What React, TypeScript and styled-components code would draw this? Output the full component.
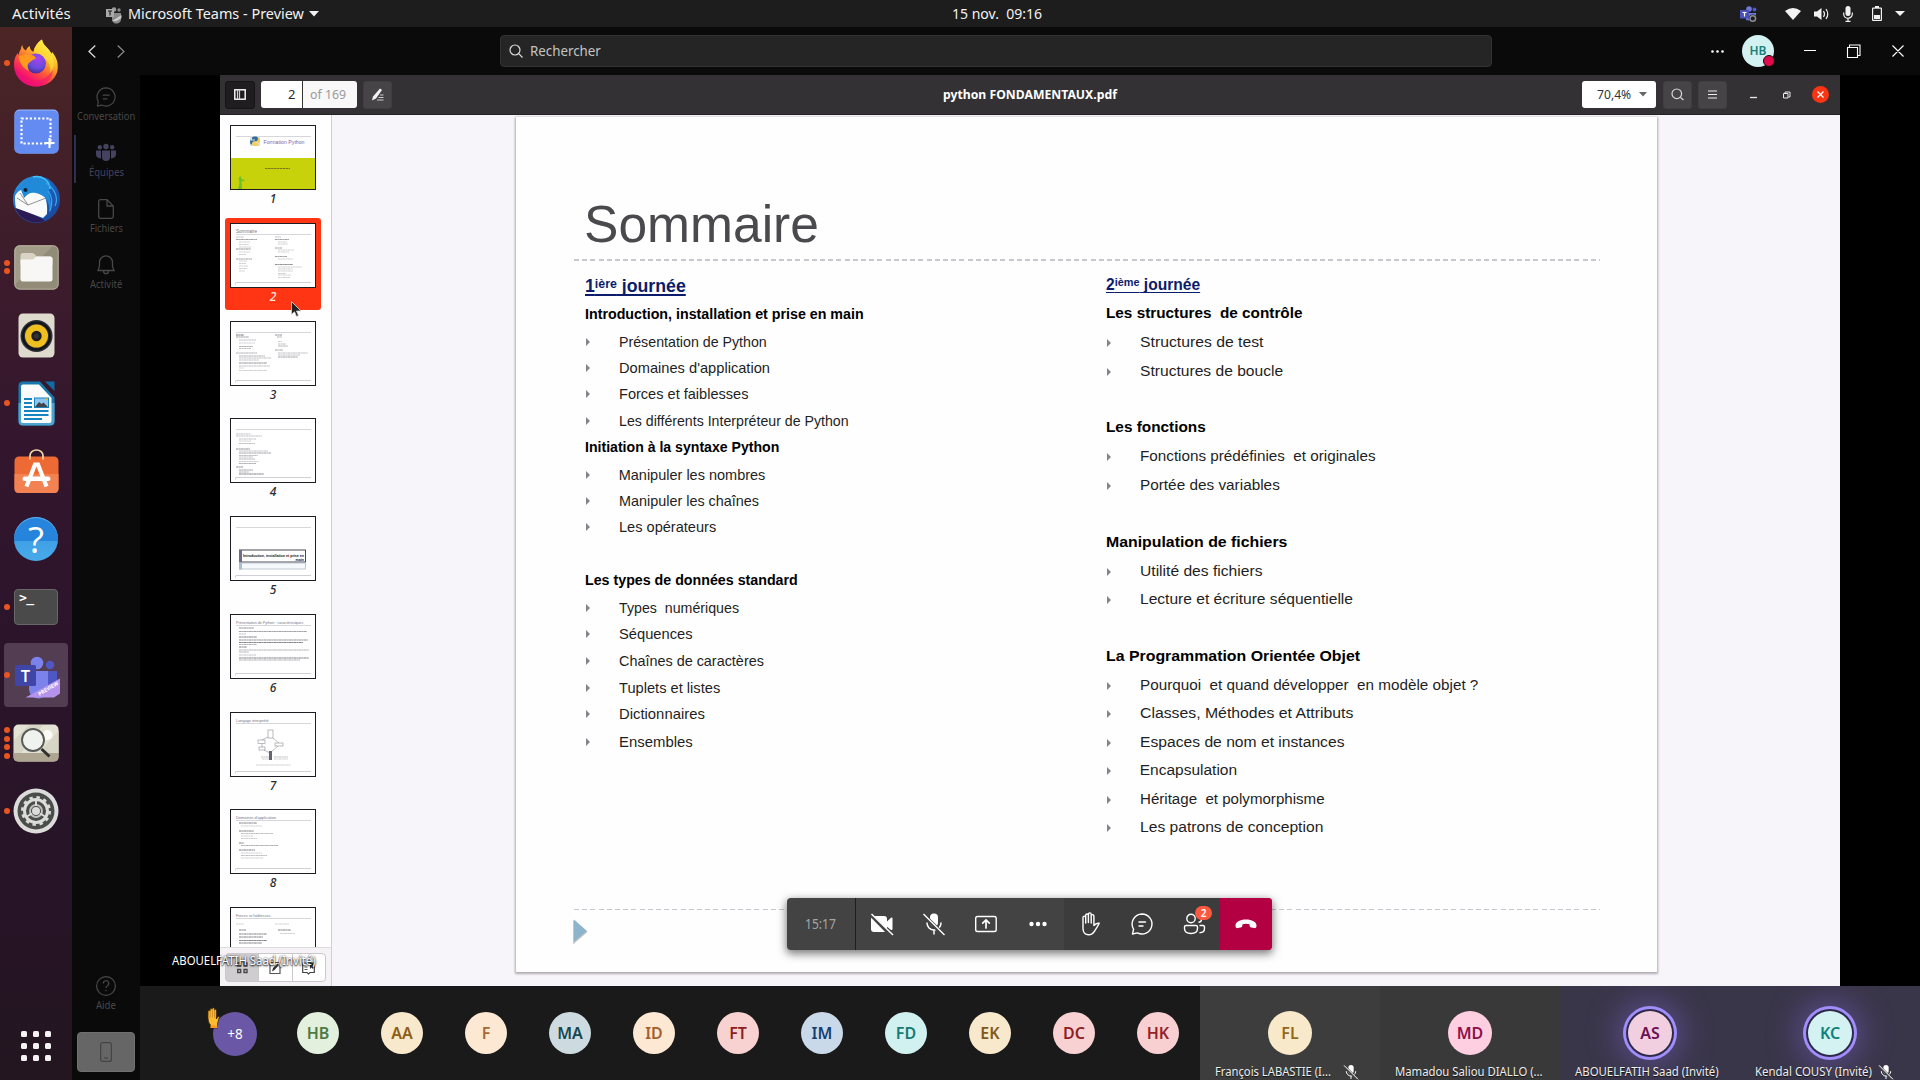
import React, { useLayoutEffect, useRef, useState } from 'react';
import styled, { createGlobalStyle, css } from 'styled-components';

const GlobalStyle = createGlobalStyle`
  * { box-sizing: border-box; }
  body { margin: 0; background: #000; overflow: hidden; font-family: 'Noto Sans', sans-serif; }
  svg { display: block; flex: none; overflow: visible; }
`;

const UI = "'Noto Sans', sans-serif";
const SLIDE = "'Liberation Sans', Arial, sans-serif";

/* ---------- text set to a given measure ---------- */
const FitBox = styled.span<{ $w: number }>`
  display: inline-block;
  flex: none;
  width: ${(p) => p.$w}px;
  white-space: pre;
  text-align: left;
`;
const FitInner = styled.span`
  display: inline-block;
  transform-origin: 0 50%;
`;
function Fit({ w, children }: { w: number; children: React.ReactNode }) {
  const ref = useRef<HTMLSpanElement>(null);
  const [k, setK] = useState(1);
  useLayoutEffect(() => {
    if (ref.current) setK(w / ref.current.offsetWidth);
  }, [w]);
  return (
    <FitBox $w={w}>
      <FitInner ref={ref} style={{ transform: `scaleX(${k})` }}>{children}</FitInner>
    </FitBox>
  );
}

/* ---------- desktop shell ---------- */
const Desktop = styled.div`
  width: 1920px;
  height: 1080px;
  display: flex;
  flex-direction: column;
  overflow: hidden;
  background: #000;
`;
const TopBar = styled.header`
  height: 27px;
  flex: none;
  display: grid;
  grid-template-columns: 952px 1fr auto;
  align-items: center;
  background: #1d1d1d;
  color: #f2f2f2;
  font: 14.5px/27px ${UI};
`;
const TopLeft = styled.div`
  display: flex;
  align-items: center;
  padding-left: 12px;
`;
const AppMenu = styled.div`
  display: flex;
  align-items: center;
  margin-left: 35px;
  gap: 5.500px;
`;
const Tray = styled.div`
  display: flex;
  align-items: center;
  padding-right: 15px;
`;
const TrayItem = styled.span<{ $ml?: number }>`
  margin-left: ${(p) => p.$ml ?? 13}px;
`;
const Work = styled.div`
  flex: 1;
  display: flex;
  min-height: 0;
`;

/* ---------- dock ---------- */
const DockBar = styled.nav`
  width: 72px;
  flex: none;
  display: flex;
  flex-direction: column;
  gap: 4px;
  padding: 4px 0 13px;
  background: linear-gradient(180deg, #4c2525 0%, #3e1d2b 20%, #33162e 40%, #2a142a 62%, #271426 85%, #231620 100%);
`;
const DockCell = styled.div<{ $active?: boolean }>`
  position: relative;
  width: 64px;
  height: 64px;
  margin-left: 4px;
  border-radius: 4px;
  display: flex;
  align-items: center;
  justify-content: center;
  background: ${(p) => (p.$active ? '#533d53' : 'transparent')};
`;
const Dots = styled.div`
  position: absolute;
  left: 0;
  top: 0;
  height: 64px;
  display: flex;
  flex-direction: column;
  justify-content: center;
  gap: 2.7px;
`;
const Dot = styled.i`
  width: 6px;
  height: 6px;
  border-radius: 50%;
  background: #e95420;
`;
const AppsGrid = styled.div`
  margin: auto auto 6px;
  display: grid;
  grid-template-columns: repeat(3, 6px);
  gap: 6px;
`;
const AppsDot = styled.i`
  height: 6px;
  border-radius: 1.5px;
  background: #f4f2f3;
`;

const Firefox = () => (
  <svg width="46" height="48" viewBox="0 0 46 48">
    <defs>
      <linearGradient id="ff1" x1=".8" y1=".1" x2=".25" y2=".95">
        <stop offset="0" stopColor="#fff44f" /><stop offset=".3" stopColor="#ffb52b" />
        <stop offset=".58" stopColor="#ff5a36" /><stop offset=".85" stopColor="#f5156c" /><stop offset="1" stopColor="#e00887" />
      </linearGradient>
      <radialGradient id="ff2" cx=".6" cy=".25" r=".8">
        <stop offset="0" stopColor="#a844f0" /><stop offset=".6" stopColor="#6a4bdc" /><stop offset="1" stopColor="#45278f" />
      </radialGradient>
      <linearGradient id="ff3" x1=".8" y1="0" x2=".3" y2="1">
        <stop offset="0" stopColor="#fff44f" /><stop offset=".6" stopColor="#ffcf2f" /><stop offset="1" stopColor="#ff8b1c" />
      </linearGradient>
    </defs>
    <path d="M8 10c0-2 .6-3 1.300-4 .3 3 1.300 4 3.700 5.500 1-2.500 2.300-3.700 3.800-4.500 0 3 1 4.500 3.700 6 .7-5 4-9.500 8.500-12.500.7 4.500 3.500 6.500 7 10.500 1 1.200 1.700 2.500 2.200 4l1-2c3 3.700 5.800 9 5.500 14C45.500 38.500 35.500 47.500 23 47.500 10.500 47.500 1 38 1 25.500 1 19 3.500 16 4.800 14c.2 1 .6 1.500 1 2C6 13 6.800 11.500 8 10z" fill="url(#ff1)" />
    <path d="M20.500 13C21.500 8 25 3 29 .5c.7 4.500 3.500 6.500 7 10.500 6.500 8 6 18 1 23.500 1-6-.5-10-3.500-13-3-3-8-4-13-8.500z" fill="url(#ff3)" />
    <circle cx="23" cy="24.500" r="10" fill="url(#ff2)" />
    <path d="M5.500 18c3-3 8-3 11-1.500 3-1.500 5.500.5 6.500 3-2.500.8-4 2-6 3.500-3 2-3 6-.5 9C10 30 7 24 5.500 18z" fill="#ff9a1f" />
    <path d="M3 30c4 9 13 13 22 11.500 7-1.300 12-5.500 14.500-11C40 40 32 47.500 23 47.500 13 47.500 5 41 3 30z" fill="#f0146e" opacity=".55" />
  </svg>
);
const Capture = () => (
  <svg width="45" height="45" viewBox="0 0 45 45">
    <rect x=".5" y=".5" width="44" height="44" rx="5" fill="#9bb8fb" />
    <rect x=".5" y="1.500" width="44" height="43" rx="5" fill="#638bf1" />
    <rect x="7.500" y="9.500" width="29" height="25" fill="none" stroke="#fff" strokeWidth="2.200" strokeDasharray="2.200 1.950" />
    <path d="M35.500 29v10M30.500 34h10" stroke="#fff" strokeWidth="2" />
  </svg>
);
const Thunderbird = () => (
  <svg width="49" height="48" viewBox="0 0 49 48">
    <defs><linearGradient id="tb" x1="0" y1="0" x2="1" y2="1"><stop offset="0" stopColor="#2f9fe8" /><stop offset=".5" stopColor="#1a63bf" /><stop offset="1" stopColor="#1b3f91" /></linearGradient></defs>
    <circle cx="24.500" cy="24.500" r="23.500" fill="url(#tb)" />
    <path d="M3 33c6 1 24 8 30 13-10 3.500-24 1-30-13z" fill="#2a1a55" />
    <path d="M3 21C8 12 14 14 24 15c10 1 12 14 11 24l-4 4L4 33c-1-4-1-8-1-12z" fill="#fafafa" />
    <path d="M5 23l11 7 18-7M16 30L8 18" fill="none" stroke="#777" strokeWidth=".8" />
    <path d="M9 13C13 4 20 0 27 1c8 1 11 7 10 14-1 8 5 12 0 24 2-12-4-19-13-21-5-1-8 0-12 5-1-4-3-6-3-10z" fill="#2089d8" />
    <path d="M21 2c9-2 17 4 17 12" fill="none" stroke="#45c1f2" strokeWidth="1.500" />
    <circle cx="13.500" cy="15" r="2" fill="#123" />
    <path d="M34 8c8 5 13 14 9 23M36 16c4 5 5 12 2 20" fill="none" stroke="#3aa7ee" strokeWidth="1.200" />
  </svg>
);
const Files = () => (
  <svg width="45" height="45" viewBox="0 0 45 45">
    <rect x=".5" y=".5" width="44" height="44" rx="5" fill="#918b78" />
    <path d="M.5 40V6Q.5.5 6 .5h33z" fill="#a19b88" />
    <rect x=".8" y=".8" width="43.400" height="43.400" rx="5" fill="none" stroke="#bbb6a5" strokeWidth=".9" />
    <path d="M6.500 10.500q0-2.500 2.500-2.500h9q2 0 3 1.500l1.500 2H36q2.500 0 2.500 2.500V20h-32z" fill="#d9d3c5" />
    <path d="M6.500 14.500H19l3.500-3H36q2.500 0 2.500 2.500v20q0 2.500-2.500 2.500H9q-2.500 0-2.500-2.500z" fill="#f8f7f5" />
  </svg>
);
const Speaker = () => (
  <svg width="37" height="45" viewBox="0 0 37 45">
    <rect x=".5" y=".5" width="36" height="44" rx="4.500" fill="#dedacd" />
    <circle cx="18.500" cy="23" r="16" fill="#2f3036" />
    <circle cx="18.500" cy="23" r="13.500" fill="none" stroke="#11131a" strokeWidth="2" />
    <circle cx="18.500" cy="23" r="11.500" fill="#eebf1f" />
    <circle cx="18.500" cy="23" r="5.200" fill="#1e1e1e" />
    <circle cx="18.500" cy="23" r="2.500" fill="#333" />
  </svg>
);
const Writer = () => (
  <svg width="37" height="45" viewBox="0 0 37 45">
    <path d="M5 .5h17l14.500 16V40q0 4.500-4.500 4.500H5Q.5 44.500.5 40V5Q.5.500 5 .5z" fill="#1878ad" />
    <path d="M.5 22h36v18q0 4.500-4.500 4.500H5Q.5 44.500.5 40z" fill="#4ba3ce" />
    <path d="M27 .5h9.500V10z" fill="#0f6da6" />
    <path d="M5 3.500h16L33.500 17v23q0 2-2 2h-27q-1.500 0-1.500-2V5.500q0-2 2-2z" fill="#fbfbfb" />
    <path d="M6 18h8M6 22h8M6 26h8M6 30h24.500M6 34h24.500M6 38h18" stroke="#1583c0" strokeWidth="1.900" />
    <rect x="16.500" y="17" width="14" height="9.500" fill="#8cc5ee" stroke="#1583c0" />
    <path d="M17 26l4-5 2.500 2 2-1.500 4.500 4.500z" fill="#444" /><path d="M27 17.500h3v3z" fill="#f6b400" />
  </svg>
);
const Software = () => (
  <svg width="45" height="45" viewBox="0 0 45 45">
    <path d="M16 12V6.500a6.500 5.500 0 0 1 13 0V12" fill="none" stroke="#f5d9a8" strokeWidth="1.700" />
    <rect x=".5" y="7.500" width="44" height="36.500" rx="4.500" fill="#ee6a35" />
    <path d="M.5 25h44v14.500q0 4.500-4.500 4.500H5q-4.500 0-4.500-4.500z" fill="#f28252" />
    <path d="M12.500 37.500L21 15.500h3l8.500 22" fill="none" stroke="#fff" strokeWidth="4.200" />
    <rect x="8.500" y="27.500" width="28" height="4.500" rx="2.200" fill="#fff" />
    <path d="M16 10.500V7M29 10.500V7" stroke="#f5d9a8" strokeWidth="1.500" />
  </svg>
);
const HelpDisc = styled.div`
  width: 44px;
  height: 44px;
  border-radius: 50%;
  background: linear-gradient(180deg, #2684dc 0 54%, #3fa0e6 54%, #49aaea 100%);
  box-shadow: inset 0 1px 0 #5cb0ee;
  color: #fff;
  text-align: center;
  font: 37px/44px 'Open Sans', sans-serif;
`;
const Term = styled.div`
  width: 44px;
  height: 36px;
  border-radius: 4px;
  background: #4a4a4a;
  border: 1px solid #686868;
  color: #fff;
  font: bold 13px/14px 'DejaVu Sans Mono', monospace;
  padding: 1px 0 0 4px;
  letter-spacing: -0.5px;
`;
const TeamsLogo = () => (
  <svg width="48" height="48" viewBox="0 0 48 48">
    <circle cx="38" cy="14" r="4.200" fill="#4f57c4" /><path d="M33 20h12v15a8 8 0 0 1-12 6z" fill="#4f57c4" />
    <circle cx="25" cy="12" r="6.300" fill="#7b83eb" /><path d="M17 20h19v17a9.500 9.500 0 0 1-19 2z" fill="#7b83eb" />
    <rect x="3" y="14" width="21" height="21" rx="1.500" fill="#4045a8" />
    <text x="13.500" y="30.500" textAnchor="middle" fontFamily="Open Sans" fontWeight="600" fontSize="16.500" fill="#fff">T</text>
    <path d="M48 27.500v15l-6 4H13.500z" fill="#b593ec" />
    <text transform="translate(27.500 45) rotate(-31)" fontFamily="Open Sans" fontWeight="700" fontSize="5.200" fill="#fff">PREVIEW</text>
  </svg>
);
const Viewer = () => (
  <svg width="46" height="38" viewBox="0 0 46 38">
    <rect x=".5" y=".5" width="45" height="37" rx="5" fill="#e3e2d5" /><path d="M26 29L46 6v23zM8 29L30 1H16L1 16v13z" fill="#d2d0bd" opacity=".7" />
    <path d="M.5 29h45v4q0 4.500-4.500 4.500H5Q.5 37.500.5 33z" fill="#afa692" />
    <circle cx="34.500" cy="11" r="5" fill="#fbfaf4" />
    <circle cx="20" cy="16" r="11" fill="#eff2ee" stroke="#595b58" strokeWidth="1.900" />
    <path d="M28.500 25l8 7.500" stroke="#2f302f" strokeWidth="3" />
  </svg>
);
const Gear = () => (
  <svg width="46" height="46" viewBox="0 0 46 46">
    <circle cx="23" cy="23" r="22.500" fill="#dcdcdb" /><circle cx="23" cy="23" r="18.500" fill="#4b4d4c" />
    <circle cx="23" cy="23" r="13.700" fill="none" stroke="#dcdcdb" strokeWidth="2.600" strokeDasharray="3.400 3.780" />
    <circle cx="23" cy="23" r="11.500" fill="none" stroke="#dcdcdb" strokeWidth="3" />
    <circle cx="23" cy="23" r="6" fill="none" stroke="#bfbfbe" strokeWidth="2" />
    <circle cx="23" cy="23" r="4" fill="#dcdcdb" />
    <path d="M23 11v7M13 29l6-3.500M33 29l-6-3.500" stroke="#dcdcdb" strokeWidth="2" />
  </svg>
);

const DOCK: { icon: React.ReactNode; dots: number; active?: boolean }[] = [
  { icon: <Firefox />, dots: 1 },
  { icon: <Capture />, dots: 0 },
  { icon: <Thunderbird />, dots: 0 },
  { icon: <Files />, dots: 2 },
  { icon: <Speaker />, dots: 0 },
  { icon: <Writer />, dots: 1 },
  { icon: <Software />, dots: 0 },
  { icon: <HelpDisc>?</HelpDisc>, dots: 0 },
  { icon: <Term>&gt;_</Term>, dots: 1 },
  { icon: <TeamsLogo />, dots: 1, active: true },
  { icon: <Viewer />, dots: 4 },
  { icon: <Gear />, dots: 1 },
];

/* ---------- Teams window ---------- */
const Teams = styled.div`
  flex: 1;
  display: flex;
  flex-direction: column;
  min-width: 0;
`;
const TeamsHead = styled.div`
  height: 48px;
  flex: none;
  display: flex;
  align-items: center;
  background: #0a0a0a;
`;
const NavArrows = styled.div`
  width: 428px;
  display: flex;
  gap: 21px;
  padding-left: 15.500px;
`;
const Search = styled.div`
  width: 992px;
  height: 32px;
  display: flex;
  align-items: center;
  gap: 7px;
  padding-left: 8px;
  border: 1px solid #323232;
  border-radius: 4px;
  background: #252525;
  color: #c4c4c4;
  font: 13.5px/30px ${UI};
`;
const HeadTools = styled.div`
  flex: 1;
  display: flex;
  align-items: center;
  padding-left: 219px;
`;
const Me = styled.div`
  position: relative;
  width: 32px;
  height: 32px;
  margin: 0 30px 0 18px;
  border-radius: 50%;
  background: #d3f1f1;
  color: #17807a;
  text-align: center;
  font: 600 12px/32px ${UI};
`;
const Presence = styled.i`
  position: absolute;
  right: -1px;
  bottom: 0;
  width: 12px;
  height: 12px;
  border-radius: 50%;
  background: #e00b4c;
  border: 1px solid #0a0a0a;
`;
const TeamsBody = styled.div`
  flex: 1;
  display: flex;
  min-height: 0;
`;
const Rail = styled.div`
  width: 68px;
  flex: none;
  display: flex;
  flex-direction: column;
  background: #0a0a0a;
  padding: 4px 0 8px;
`;
const RailItem = styled.div<{ $on?: boolean }>`
  height: 56px;
  display: flex;
  flex-direction: column;
  align-items: center;
  padding-top: 8px;
  color: ${(p) => (p.$on ? '#45425f' : '#484848')};
  background: ${(p) => (p.$on ? 'linear-gradient(#302f4f, #302f4f) 2px 0 / 2px 48px no-repeat' : 'none')};
  font: 10px/18px ${UI};
`;
const RailBottom = styled.div`
  margin-top: auto;
`;
const PhoneBox = styled.div`
  width: 58px;
  height: 40px;
  margin: 8px auto 0;
  border-radius: 4px;
  background: #666;
  border: 1px solid #707070;
  display: flex;
  align-items: center;
  justify-content: center;
`;
const Main = styled.div`
  flex: 1;
  display: flex;
  flex-direction: column;
  min-width: 0;
`;
const Stage = styled.div`
  position: relative;
  height: 911px;
  flex: none;
  display: flex;
  padding: 0 80px;
  background: #000;
`;
const ShareName = styled.div`
  position: absolute;
  left: 32px;
  top: 877px;
  color: #fff;
  font: 12px/18px ${UI};
  text-shadow: 0 1px 2px #000, 0 0 2px rgba(0, 0, 0, 0.7);
`;

/* ---------- shared PDF viewer ---------- */
const Pdf = styled.div`
  width: 1620px;
  display: flex;
  flex-direction: column;
`;
const PdfBar = styled.div`
  height: 40px;
  flex: none;
  display: grid;
  grid-template-columns: 723px 174px 1fr;
  align-items: center;
  background: #333133;
  border-bottom: 1px solid #242224;
  color: #fff;
  font: bold 12.5px/38px ${UI};
`;
const BarSide = styled.div<{ $end?: boolean }>`
  display: flex;
  align-items: center;
  padding: ${(p) => (p.$end ? '0 0 0 465px' : '0 0 0 5px')};
`;
const BarBtn = styled.div<{ $dark?: boolean; $ml?: number }>`
  width: ${(p) => (p.$dark ? 30 : 29)}px;
  height: 28px;
  margin-left: ${(p) => p.$ml ?? 0}px;
  border-radius: 3px;
  display: flex;
  align-items: center;
  justify-content: center;
  background: ${(p) => (p.$dark ? '#1f1d1f' : '#464446')};
  border: 1px solid ${(p) => (p.$dark ? '#161416' : '#403e40')};
`;
const PageEntry = styled.div`
  display: flex;
  width: 96px;
  height: 27px;
  margin: 0 6px;
  border-radius: 3px;
  overflow: hidden;
  font: 13px/26px ${UI};
`;
const PageNo = styled.div`
  width: 42px;
  padding-right: 6.500px;
  text-align: right;
  background: #fff;
  color: #2b2b2b;
  border-right: 1px solid #333;
`;
const PageCount = styled.div`
  flex: 1;
  padding-left: 7px;
  background: #f8f8f9;
  color: #9a9a9c;
`;
const ZoomBox = styled.div`
  width: 74px;
  height: 27px;
  padding-left: 14.500px;
  display: flex;
  align-items: center;
  gap: 8.500px;
  border-radius: 3px;
  background: #fff;
  color: #333;
  font: 12.5px/26px ${UI};
`;
const CloseDisc = styled.div`
  width: 17px;
  height: 17px;
  margin-left: 21.500px;
  border-radius: 50%;
  background: #fb3413;
  display: flex;
  align-items: center;
  justify-content: center;
`;
const PdfBody = styled.div`
  flex: 1;
  display: flex;
  min-height: 0;
  background: #f7f5f9;
`;
const Thumbs = styled.div`
  width: 112px;
  flex: none;
  display: flex;
  flex-direction: column;
  background: #fefefe;
  border-right: 1px solid #d3d0d5;
`;
const ThumbList = styled.div`
  height: 832px;
  flex: none;
  overflow: hidden;
  padding: 5px 0 0 5px;
`;
const ThumbCell = styled.div<{ $on?: boolean }>`
  position: relative;
  width: 96px;
  height: 92px;
  margin-bottom: 5.760px;
  padding: 5px 5px 0;
  border-radius: 3px;
  background: ${(p) => (p.$on ? '#ff3514' : 'transparent')};
  color: ${(p) => (p.$on ? '#ffe8e4' : '#2c2c2e')};
  font: italic 500 12px/18px ${UI};
  text-align: center;
`;
const ThumbPage = styled.div`
  height: 65px;
  border: 1px solid #1c1c22;
  background: #fff;
  font-style: normal;
  font-weight: 400;
`;
const Cursor = styled.div`
  position: absolute;
  left: 66px;
  top: 83px;
`;
const ViewTabs = styled.div`
  flex: 1;
  padding: 5px 5px 4px;
  background: #f5f3f6;
  border-top: 1px solid #dedbe0;
  display: flex;
`;
const Tab = styled.div<{ $on?: boolean }>`
  flex: 1;
  display: flex;
  align-items: center;
  justify-content: center;
  border: 1px solid #cbc8cc;
  margin-left: -1px;
  background: ${(p) => (p.$on ? '#cfcdd0' : '#fff')};
  &:first-child { border-radius: 4px 0 0 4px; margin-left: 0; }
  &:last-child { border-radius: 0 4px 4px 0; }
`;
const PageArea = styled.div`
  flex: 1;
  padding: 2px 0 0 184px;
`;
const Page = styled.article`
  width: 1141px;
  height: 855px;
  padding: 0 57px 0 58px;
  display: flex;
  flex-direction: column;
  background: #fefefe;
  box-shadow: 0 1px 2px 1px rgba(60, 55, 70, 0.38);
  font-family: ${SLIDE};
`;
const Title = styled.h1`
  height: 133px;
  margin: 0 0 9px;
  padding-left: 10px;
  display: flex;
  align-items: flex-end;
  color: #4a494d;
  font: normal 52px/52px ${SLIDE};
`;
const Rule = styled.div`
  height: 1.500px;
  flex: none;
  background: repeating-linear-gradient(90deg, #c9c7d0 0 5px, transparent 5px 8.200px);
`;
const Columns = styled.div`
  height: 648px;
  flex: none;
  display: grid;
  grid-template-columns: 521px 1fr;
  padding-left: 10.700px;
`;
const Column = styled.div<{ $size: number; $lh: number }>`
  font-size: ${(p) => p.$size}px;
  line-height: ${(p) => p.$lh}px;
  color: #000;
`;
const Line = styled.div<{ $h: number; $kind: string; $big?: boolean }>`
  height: ${(p) => p.$h}px;
  display: flex;
  align-items: flex-end;
  ${(p) => p.$kind === 'i' && css`color: #1f1f24;`}
  ${(p) => p.$kind !== 'i' && css`font-weight: bold;`}
  ${(p) => p.$kind === 'd' && css`
    color: #0b1c6c;
    font-size: ${p.$big ? 18.5 : 16}px;
    line-height: ${p.$big ? 23 : 21}px;
  `}
`;
const Bullet = styled.i`
  width: 34px;
  height: 13.500px;
  flex: none;
  &::before {
    content: '';
    display: block;
    width: 0;
    margin-left: 1px;
    border: solid transparent;
    border-width: 4px 0 4px 4.500px;
    border-left-color: #85828a;
  }
`;
const Day = styled.span<{ $thick: number }>`
  text-decoration: underline;
  text-decoration-thickness: ${(p) => p.$thick}px;
  text-decoration-skip-ink: none;
  text-underline-offset: 1.500px;
`;
const Sup = styled.span`
  font-size: 0.7em;
  line-height: 0;
  vertical-align: 0.32em;
`;
const Foot = styled.div`
  padding-top: 9px;
`;

type Row = [kind: 'd' | 'h' | 'i', baseline: number, width: number, text: string];
const LEFT: Row[] = [
  ['d', 292, 100.5, '1|ière| journée'],
  ['h', 319, 279, 'Introduction, installation et prise en main'],
  ['i', 347, 148, 'Présentation de Python'],
  ['i', 373, 150.5, "Domaines d'application"],
  ['i', 399, 129.5, 'Forces et faiblesses'],
  ['i', 426, 229.5, 'Les différents Interpréteur de Python'],
  ['h', 452, 194.5, 'Initiation à la syntaxe Python'],
  ['i', 480, 147, 'Manipuler les nombres'],
  ['i', 506, 140, 'Manipuler les chaînes'],
  ['i', 532, 97.5, 'Les opérateurs'],
  ['h', 585, 213, 'Les types de données standard'],
  ['i', 613, 120.5, 'Types  numériques'],
  ['i', 639, 74, 'Séquences'],
  ['i', 666, 145, 'Chaînes de caractères'],
  ['i', 693, 101, 'Tuplets et listes'],
  ['i', 719, 86, 'Dictionnaires'],
  ['i', 747, 74, 'Ensembles'],
];
const RIGHT: Row[] = [
  ['d', 290, 94.5, '2|ième| journée'],
  ['h', 319, 196.5, 'Les structures  de contrôle'],
  ['i', 348, 123, 'Structures de test'],
  ['i', 377, 143, 'Structures de boucle'],
  ['h', 433, 100, 'Les fonctions'],
  ['i', 462, 236, 'Fonctions prédéfinies  et originales'],
  ['i', 491, 139.5, 'Portée des variables'],
  ['h', 548, 181, 'Manipulation de fichiers'],
  ['i', 577, 122, 'Utilité des fichiers'],
  ['i', 605, 213, 'Lecture et écriture séquentielle'],
  ['h', 662, 254, 'La Programmation Orientée Objet'],
  ['i', 691, 338.5, 'Pourquoi  et quand développer  en modèle objet ?'],
  ['i', 719, 213, 'Classes, Méthodes et Attributs'],
  ['i', 748, 204, 'Espaces de nom et instances'],
  ['i', 776, 97, 'Encapsulation'],
  ['i', 805, 185, 'Héritage  et polymorphisme'],
  ['i', 833, 183.5, 'Les patrons de conception'],
];
function SlideColumn({ rows, size, lh, big }: { rows: Row[]; size: number; lh: number; big?: boolean }) {
  return (
    <Column $size={size} $lh={lh}>
      {rows.map(([kind, base, w, text], i) => {
        const prev = i ? rows[i - 1][1] : 256;
        const parts = text.split('|');
        return (
          <Line key={text} $kind={kind} $h={base - prev} $big={big}>
            {kind === 'i' && <Bullet />}
            <Fit w={w}>
              {kind === 'd' ? <Day $thick={big ? 2 : 1.3}>{parts[0]}<Sup>{parts[1]}</Sup>{parts[2]}</Day> : text}
            </Fit>
          </Line>
        );
      })}
    </Column>
  );
}

/* Miniature pages: each bar is [x, y, width, darkness] */
type Bar = [number, number, number, number];
const MINI: { title?: string; size?: number; bars: Bar[] }[] = [
  { bars: [] },
  {
    title: 'Sommaire', size: 4.6,
    bars: [[5, 13, 8, 4], [5, 15.5, 21, 6], [8, 18, 11, 3], [8, 20.5, 10, 3], [8, 23, 12, 3], [5, 25, 15, 7], [8, 28, 11, 3], [8, 30.5, 7, 3], [5, 35, 16, 6], [8, 37, 8, 3], [8, 39.5, 7, 3], [8, 42, 9, 3], [8, 44.500, 8, 3], [8, 47, 6, 3],
      [44, 13, 6, 4], [44, 15.500, 14, 6], [47, 18, 9, 3], [47, 20, 10, 3], [44, 24, 7, 6], [47, 26, 16, 3], [47, 28, 11, 3], [44, 32.500, 12, 6], [47, 35, 15, 3], [44, 40.500, 18, 7], [47, 43, 24, 3], [47, 45, 15, 3], [47, 47, 15, 3], [47, 49.500, 8, 3], [47, 51, 13, 3], [47, 53.500, 12, 3]],
  },
  {
    bars: [[5, 13, 8, 9], [5, 15, 13, 6], [8, 18, 17, 4], [8, 21, 16, 3], [8, 24.500, 14, 5], [8, 26.500, 12, 4], [5, 31, 21, 5], [8, 34, 26, 5], [8, 36, 32, 4], [8, 38, 20, 4], [8, 41, 28, 7], [8, 44, 31, 4], [8, 46, 5, 3], [8, 48.500, 28, 3], [44, 13, 7, 7], [46, 15, 5, 5], [47, 19.500, 4, 3], [47, 22, 8, 4], [47, 24, 10, 5], [44, 28, 8, 6], [47, 31, 30, 4], [47, 33, 22, 4], [47, 35, 20, 6]],
  },
  {
    bars: [[5, 15, 15, 4], [5, 17, 26, 4], [8, 20, 17, 4], [8, 22, 12, 3], [8, 24.500, 16, 4], [5, 30, 14, 7], [8, 32, 29, 4], [8, 34, 32, 6], [8, 36.500, 19, 4], [8, 38, 14, 4], [8, 40, 16, 5], [8, 42.500, 20, 3], [8, 44.500, 17, 5], [5, 48, 7, 7], [8, 51, 14, 6], [8, 53, 10, 5], [8, 55, 25, 8]],
  },
  { bars: [] },
  {
    title: 'Présentation de Python : caractéristiques', size: 3.700,
    bars: [[8, 13, 15, 7], [8, 16.500, 68, 6], [8, 19, 7, 4], [8, 22, 18, 8], [8, 25, 69, 7], [8, 27.500, 64, 8], [8, 29.500, 18, 5], [8, 32, 8, 8], [8, 35, 70, 5], [8, 37, 10, 5], [8, 40, 17, 4], [8, 43, 70, 8], [8, 45, 61, 5]],
  },
  { title: 'Langage interprété', size: 3.900, bars: [[25, 52, 35, 3], [30, 44, 9, 4], [43, 44, 14, 4], [31, 46, 8, 3], [43, 46, 14, 3]] },
  {
    title: "Domaines d'application", size: 3.900,
    bars: [[8, 13, 18, 8], [10, 16, 21, 3], [8, 21, 15, 8], [10, 23.500, 32, 4], [10, 26, 12, 3], [10, 28.500, 16, 3], [8, 33, 5, 8], [10, 35.500, 37, 5], [8, 40, 16, 8], [10, 43, 21, 3], [10, 45.500, 26, 4], [10, 48, 22, 3]],
  },
  { title: 'Forces et faiblesses', size: 3.900, bars: [[5, 16, 8, 3], [8, 22, 7, 8], [8, 26, 28, 8], [8, 29, 24, 8], [8, 32.500, 28, 8], [8, 35, 23, 8], [44, 16, 14, 3], [47, 22, 13, 8], [49, 25.500, 15, 3]] },
];
function MiniPage({ n }: { n: number }) {
  const m = MINI[n];
  return (
    <svg width="84" height="63" viewBox="0 0 84 63">
      <path d="M5 10.500h75" stroke="#c6c4cc" strokeWidth=".7" />
      {n > 0 && <path d="M5 58.500h75M4.500 58.500v2" stroke="#bcbac0" strokeWidth=".7" />}
      {m.title && <text x="5" y={n === 1 ? 9.300 : 9.200} fontFamily="Liberation Sans" fontSize={m.size} fill="#77757f">{m.title}</text>}
      {m.bars.map(([x, y, w, d], i) => (
        <path key={i} d={`M${x} ${y}h${w}`} stroke="#33323c" strokeOpacity={d / 13} strokeWidth="1" strokeDasharray="2.700 .4 1.600 .3" />
      ))}
      {n === 0 && (
        <g>
          <rect y="32" width="84" height="31" fill="#c8d20a" />
          <rect x="19" y="10" width="10" height="10" fill="#dedfd8" />
          <path d="M24 10.500c-3 0-3 1-3 3h3v1h-5c0 4 1 4 2 4 0-3 1-3 3-3 2.500 0 3-1 3-2.500 0-2-1-2.500-3-2.500z" fill="#2f6ca5" />
          <path d="M24 20c3 0 3.500-1 3.500-2.500H24v-1h5c.5-4-.5-4.500-2-4.500 0 3-1 3.500-3 3.500-2.500 0-2.500 1-2.500 2.500s1 2 2.500 2z" fill="#f7cf47" />
          <text x="32.500" y="17.500" fontFamily="Liberation Sans" fontSize="5.200" textLength="41" fill="#7468ad">Formation Python</text>
          <path d="M34 42.500h25" stroke="#7d7822" strokeWidth="1.100" strokeDasharray="2 .5 3 .5" />
          <path d="M7 63l1.500-6-1-5 2-2 1 3 4 1.500-4 1 .5 7.500z" fill="#6cc02c" />
        </g>
      )}
      {n === 4 && (
        <g>
          <rect x="8.500" y="33" width="66" height="12" fill="#fff" stroke="#4b4858" />
          <rect x="8" y="33" width="3" height="12" fill="#6f6b88" />
          <text x="73" y="39.500" textAnchor="end" fontFamily="Liberation Sans" fontWeight="bold" fontSize="4" textLength="61" lengthAdjust="spacingAndGlyphs" fill="#111">Introduction, installation et prise en</text>
          <text x="73" y="43.800" textAnchor="end" fontFamily="Liberation Sans" fontWeight="bold" fontSize="3.600" fill="#111">main</text>
          <rect x="8.500" y="46" width="66" height="6" fill="#f6f9fc" stroke="#a9b3bf" strokeWidth=".7" />
          <rect x="8" y="46" width="3" height="6.500" fill="#a9c0d4" />
        </g>
      )}
      {n === 6 && (
        <g fill="none" stroke="#8e8c94" strokeWidth=".6">
          <rect x="37" y="17" width="5" height="8" /><rect x="27" y="27" width="7" height="3.500" /><rect x="44" y="30" width="8" height="3" /><rect x="28" y="34" width="6" height="3" />
          <path d="M37 24l-6 3M42 25l6 5M31 31v3M33 37l6 3M47 33l-7 6" /><path d="M39.500 38v9" stroke="#66646c" strokeWidth="3" />
        </g>
      )}
    </svg>
  );
}

/* ---------- call bar ---------- */
const CallBar = styled.div`
  position: absolute;
  left: 647px;
  top: 823px;
  width: 485px;
  height: 52px;
  display: flex;
  border-radius: 4px;
  background: #434343;
  box-shadow: 0 3px 9px 1px rgba(0, 0, 0, 0.5);
`;
const Timer = styled.div`
  width: 69px;
  border-right: 1px solid #1e1e1e;
  color: #a6a6a6;
  font: 14px/51px ${UI};
  padding-left: 18px;
`;
const CallBtn = styled.div<{ $tone?: 'dark' | 'red' }>`
  position: relative;
  width: 52px;
  display: flex;
  align-items: center;
  justify-content: center;
  color: #fff;
  background: ${(p) => (p.$tone === 'red' ? '#b30043' : p.$tone === 'dark' ? '#3c3c3c' : 'transparent')};
  border-radius: ${(p) => (p.$tone === 'red' ? '0 4px 4px 0' : '0')};
`;
const Badge = styled.span`
  position: absolute;
  left: 27px;
  top: 8px;
  width: 17px;
  height: 14px;
  border-radius: 7px;
  background: #fc5a40;
  color: #fff;
  text-align: center;
  font: 600 10px/14px ${UI};
`;

/* ---------- participants ---------- */
const Strip = styled.div`
  flex: 1;
  display: flex;
  min-height: 0;
  background: #1a1a1a;
  padding-left: 52px;
`;
const Slot = styled.div`
  position: relative;
  width: 84px;
  padding-top: 26px;
  display: flex;
  justify-content: center;
  align-items: flex-start;
`;
const Avatar = styled.div<{ $bg: string; $fg: string; $s?: number; $ring?: boolean }>`
  width: ${(p) => p.$s ?? 42}px;
  height: ${(p) => p.$s ?? 42}px;
  flex: none;
  border-radius: 50%;
  background: ${(p) => p.$bg};
  color: ${(p) => p.$fg};
  text-align: center;
  font: 600 16px/${(p) => p.$s ?? 42}px ${UI};
  ${(p) => p.$ring && css`box-shadow: 0 0 0 2px #2d2948, 0 0 0 5px #a18dfb, 0 0 26px 14px rgba(98, 84, 155, 0.6);`}
`;
const More = styled(Avatar)`
  font-weight: 400;
  font-size: 13.5px;
  margin-left: 2px;
`;
const Raised = styled.div`
  position: absolute;
  left: 14px;
  top: 21px;
`;
const Tile = styled.div<{ $bg: string }>`
  width: 180px;
  flex: none;
  overflow: hidden;
  padding: 25px 0 0;
  display: flex;
  flex-direction: column;
  align-items: center;
  background: ${(p) => p.$bg};
`;
const TileName = styled.div<{ $gap: number }>`
  width: 100%;
  margin-top: 8px;
  padding: 0 0 0 15px;
  display: flex;
  align-items: center;
  gap: ${(p) => p.$gap}px;
  position: relative;
  color: #eee;
  font: 12px/17px ${UI};
  text-shadow: 0 1px 1px #111;
`;

const PEOPLE: [string, string, string][] = [
  ['HB', '#e3f0de', '#4f7a43'], ['AA', '#f8e9cc', '#8d5f16'], ['F', '#fde8d4', '#a8683a'], ['MA', '#cddbe0', '#14484f'],
  ['ID', '#fde8d4', '#a35f2e'], ['FT', '#f8d2d0', '#8c1f24'], ['IM', '#c9d9ea', '#173f74'], ['FD', '#d1f1f0', '#157a72'],
  ['EK', '#f8e9cc', '#81581d'], ['DC', '#f8d2d2', '#8d2025'], ['HK', '#f9d0d1', '#94232c'],
];
const TILES = [
  { i: 'FL', bg: '#f9e9cb', fg: '#93681c', tile: '#3d3d3d', name: 'François LABASTIE (I...', w: 116, mic: true, gap: 12 },
  { i: 'MD', bg: '#fdcfe0', fg: '#8f0f4c', tile: '#393939', name: 'Mamadou Saliou DIALLO (...', w: 148 },
  { i: 'AS', bg: '#f1cfe1', fg: '#6d0f50', tile: '#3a364a', name: 'ABOUELFATIH Saad (Invité)', w: 144, ring: true },
  { i: 'KC', bg: '#d3f2f1', fg: '#11807a', tile: '#3a364a', name: 'Kendal COUSY (Invité)', w: 117, ring: true, mic: true, gap: 6 },
];

const MicOff = ({ s = 24 }: { s?: number }) => (
  <svg width={s} height={s} viewBox="0 0 24 24" fill="none" stroke="#fff" strokeWidth="1.500">
    <rect x="8" y="1.500" width="8" height="13" rx="4" fill="#fff" stroke="none" />
    <path d="M5 10.500v.5a7 7 0 0 0 14 0v-.5M12 18v4.500" />
    <path d="M1.500 3L21 22.500" stroke="#434343" strokeWidth="4" /><path d="M1.500 2L22.500 23" />
  </svg>
);
const CamOff = () => (
  <svg width="24" height="24" viewBox="0 0 24 24">
    <path d="M4 4h10q3 0 3 3v2.500l4-3.700q1.500-.8 1.500.8v10.500q0 1.500-1.500.8l-4-3.200V17q0 3-3 3H4q-3 0-3-3V7q0-3 3-3z" fill="#fff" />
    <path d="M1.500 3.500L21.500 24" stroke="#434343" strokeWidth="3.500" /><path d="M1.500 2L23 23" stroke="#fff" strokeWidth="1.500" />
  </svg>
);
const ShareUp = () => (
  <svg width="24" height="24" viewBox="0 0 24 24" fill="none" stroke="#fff" strokeWidth="1.400" strokeLinecap="round">
    <rect x="1.700" y="4.500" width="20.500" height="15" rx="1.800" /><path d="M12 16V8.200M8.700 11.200L12 7.900l3.300 3.300" strokeWidth="1.700" />
  </svg>
);
const Chat = ({ s = 22, w = 1.4 }: { s?: number; w?: number }) => (
  <svg width={s} height={s} viewBox="0 0 22 22" fill="none" stroke="currentColor" strokeWidth={w} strokeLinecap="round" strokeLinejoin="round">
    <path d="M11 1a10 10 0 1 1-4.600 18.900L1.500 21l1.100-4.800A10 10 0 0 1 11 1zM8 9h6.500M8 13h4" />
  </svg>
);
const Hand = () => (
  <svg width="22" height="24" viewBox="0 0 22 24" fill="none" stroke="#fff" strokeWidth="1.400" strokeLinecap="round" strokeLinejoin="round">
    <path d="M4 13V5.500a1.300 1.300 0 0 1 2.700 0V11M6.700 11V3.300a1.300 1.300 0 0 1 2.700 0V10.500M9.400 10.500V2.300a1.300 1.300 0 0 1 2.800 0v8.200M12.200 11V4a1.300 1.300 0 0 1 2.700 0v9.500c1.500-1.800 3-2.700 5.300-2.200-1.400 3.200-2.800 5-4.500 7.500-1.500 2.500-3 4-6 4C6 22.800 4 20.500 4 16.500V13" />
  </svg>
);
const People = () => (
  <svg width="24" height="24" viewBox="0 0 24 24" fill="none" stroke="#fff" strokeWidth="1.400">
    <circle cx="9" cy="6.500" r="4.200" /><path d="M4 13.500h10q1.500 0 1.500 1.500v1.500q0 5-6.500 5T2.500 16.500V15q0-1.500 1.500-1.500zM16.500 10.300a3 3 0 1 0 0-6M17.500 20.700c3.500 0 5-1.500 5-4.200V15q0-1.500-1.500-1.500h-3.500" />
  </svg>
);

export default function App() {
  return (
    <Desktop>
      <GlobalStyle />
      <TopBar>
        <TopLeft>
          <Fit w={59}>Activités</Fit>
          <AppMenu>
            <svg width="16" height="14" viewBox="0 0 16 14"><circle cx="8" cy="2.500" r="2.300" fill="#999" /><circle cx="13" cy="3" r="1.700" fill="#888" /><path d="M6 6h9v5a4 4 0 0 1-9 2z" fill="#8b8b8b" /><rect y="2" width="8" height="8" fill="#aaa" /><path d="M2 4h4M4 4v4.500" stroke="#222" strokeWidth="1.200" /><path d="M15.500 8v3l-5 3H6z" fill="#ccc" /></svg>
            <Fit w={176}>Microsoft Teams - Preview</Fit>
            <svg width="10" height="6" viewBox="0 0 10 6"><path d="M0 0h10L5 5.500z" fill="#f2f2f2" /></svg>
          </AppMenu>
        </TopLeft>
        <Fit w={90}>15 nov.  09:16</Fit>
        <Tray>
          <TrayItem>
            <svg width="18" height="18" viewBox="0 0 18 18"><circle cx="9" cy="4" r="2.800" fill="#6f78dd" /><circle cx="14.500" cy="4.500" r="2" fill="#4f57c4" /><path d="M6 8h10v4l-5 4-5-1z" fill="#6f78dd" /><rect y="5" width="9" height="8.500" fill="#4a50b8" /><path d="M2.500 7.500h4M4.500 7.500v4" stroke="#fff" strokeWidth="1.200" /><circle cx="12.800" cy="13.500" r="4" fill="#1d1d1d" /><circle cx="12.800" cy="13.500" r="2.800" fill="none" stroke="#8d8d8d" strokeWidth="1.500" /></svg>
          </TrayItem>
          <TrayItem $ml={27}><svg width="16" height="12" viewBox="0 0 16 12"><path d="M0 3Q8-3 16 3L8 12z" fill="#f2f2f2" /></svg></TrayItem>
          <TrayItem><svg width="16" height="14" viewBox="0 0 16 14"><path d="M0 4.500h3L7.500 1v12L3 9.500H0z" fill="#f2f2f2" /><path d="M9.500 4q2 3 0 6M12 2q3.500 5 0 10" fill="none" stroke="#f2f2f2" strokeWidth="1.200" /></svg></TrayItem>
          <TrayItem><svg width="10" height="16" viewBox="0 0 10 16"><rect x="2.500" width="5" height="10" rx="2.500" fill="#f2f2f2" /><path d="M.7 6.500v1.500a4.300 4.300 0 0 0 8.600 0V6.500M5 12.500V15M2.500 15.300h5" fill="none" stroke="#f2f2f2" strokeWidth="1.200" /></svg></TrayItem>
          <TrayItem $ml={19}><svg width="10" height="15" viewBox="0 0 10 15"><path d="M3 0h4v1.500h2q1 0 1 1V14q0 1-1 1H1q-1 0-1-1V2.500q0-1 1-1h2z" fill="#f2f2f2" /><rect x="1.200" y="2.700" width="7.600" height="11.100" fill="#1d1d1d" /><rect x="2" y="9" width="6" height="4" fill="#f2f2f2" /></svg></TrayItem>
          <TrayItem><svg width="10" height="5" viewBox="0 0 10 5"><path d="M0 0h10L5 5z" fill="#f2f2f2" /></svg></TrayItem>
        </Tray>
      </TopBar>

      <Work>
        <DockBar>
          {DOCK.map((d, i) => (
            <DockCell key={i} $active={d.active}>
              <Dots>{Array.from({ length: d.dots }, (_, k) => <Dot key={k} />)}</Dots>
              {d.icon}
            </DockCell>
          ))}
          <AppsGrid>{Array.from({ length: 9 }, (_, k) => <AppsDot key={k} />)}</AppsGrid>
        </DockBar>

        <Teams>
          <TeamsHead>
            <NavArrows>
              <svg width="8" height="13" viewBox="0 0 8 13"><path d="M7.300.5L1 6.500l6.300 6" fill="none" stroke="#d8d8d8" strokeWidth="1.300" /></svg>
              <svg width="8" height="13" viewBox="0 0 8 13"><path d="M.7.5L7 6.500l-6.300 6" fill="none" stroke="#8a8a8a" strokeWidth="1.200" /></svg>
            </NavArrows>
            <Search>
              <svg width="14" height="14" viewBox="0 0 14 14" fill="none" stroke="#ddd" strokeWidth="1.200"><circle cx="6" cy="6" r="5" /><path d="M9.700 9.700L13.500 13.500" /></svg>
              <Fit w={71}>Rechercher</Fit>
            </Search>
            <HeadTools>
              <svg width="13" height="3" viewBox="0 0 13 3" fill="#fff"><circle cx="1.500" cy="1.500" r="1.300" /><circle cx="6.500" cy="1.500" r="1.300" /><circle cx="11.500" cy="1.500" r="1.300" /></svg>
              <Me><Fit w={17}>HB</Fit><Presence /></Me>
              <svg width="100" height="16" viewBox="0 0 100 16" fill="none" stroke="#fff" strokeWidth="1.100">
                <path d="M0 7.500h12M43.500 4.500h10v10h-10zM45.500 4.500v-2.500h10.500v10.500h-2.500M88.500 2.500l11 11M99.500 2.500l-11 11" />
              </svg>
            </HeadTools>
          </TeamsHead>

          <TeamsBody>
            <Rail>
              <RailItem><Chat s={20} w={1.3} /><Fit w={58}>Conversation</Fit></RailItem>
              <RailItem $on>
                <svg width="20" height="20" viewBox="0 0 20 20" fill="currentColor"><circle cx="10" cy="3.500" r="2.700" /><circle cx="3.800" cy="4.300" r="2.200" /><circle cx="16.200" cy="4.300" r="2.200" /><path d="M6 7.500h8V14a4 4 0 0 1-8 0zM0 7.500h5V15.500Q0 15 0 11.500zM20 7.500h-5V15.500q5-.5 5-4z" /></svg>
                <Fit w={35}>Équipes</Fit>
              </RailItem>
              <RailItem>
                <svg width="20" height="20" viewBox="0 0 20 20" fill="none" stroke="currentColor" strokeWidth="1.300"><path d="M4.500.7H11L17.300 7v10.500q0 1.800-1.800 1.800h-11q-1.800 0-1.800-1.800v-15Q2.700.7 4.500.7zM11 .7V7h6.300" /></svg>
                <Fit w={33}>Fichiers</Fit>
              </RailItem>
              <RailItem>
                <svg width="20" height="20" viewBox="0 0 20 20" fill="none" stroke="currentColor" strokeWidth="1.300"><path d="M10 .8a6.500 6.500 0 0 1 6.500 6.500v4.200l1.500 4H2l1.500-4V7.300A6.500 6.500 0 0 1 10 .8zM7.500 16a2.500 2.700 0 0 0 5 0" /></svg>
                <Fit w={32}>Activité</Fit>
              </RailItem>
              <RailBottom>
                <RailItem>
                  <svg width="20" height="20" viewBox="0 0 20 20" fill="none" stroke="currentColor" strokeWidth="1.200"><circle cx="10" cy="10" r="9.400" /><path d="M7.300 7.500a2.700 2.700 0 1 1 4 2.300c-1 .6-1.300 1-1.300 2.200M10 13.700v1.500" /></svg>
                  <Fit w={20}>Aide</Fit>
                </RailItem>
                <PhoneBox><svg width="12" height="20" viewBox="0 0 12 20" fill="none" stroke="#444" strokeWidth="1.200"><rect x=".6" y=".6" width="10.800" height="18.800" rx="2" /><path d="M4 16h4" /></svg></PhoneBox>
              </RailBottom>
            </Rail>

            <Main>
              <Stage>
                <Pdf>
                  <PdfBar>
                    <BarSide>
                      <BarBtn $dark><svg width="12" height="11" viewBox="0 0 12 11"><rect x=".8" y=".8" width="10.400" height="9.400" fill="none" stroke="#f2f2f2" strokeWidth="1.500" /><path d="M3.500 1v9M5.500 1v9" stroke="#ccc" strokeWidth="1.200" /></svg></BarBtn>
                      <PageEntry><PageNo>2</PageNo><PageCount><Fit w={36}>of 169</Fit></PageCount></PageEntry>
                      <BarBtn><svg width="13" height="13" viewBox="0 0 13 13"><path d="M9 .5l2 1.500-6 8.500-4 2 1-4z" fill="#f2f2f2" /><path d="M9 7h3.500M7.500 9.500h5M6 12h6.500" stroke="#ccc" /></svg></BarBtn>
                    </BarSide>
                    <Fit w={174}>python FONDAMENTAUX.pdf</Fit>
                    <BarSide $end>
                      <ZoomBox><Fit w={34}>70,4%</Fit><svg width="8" height="5" viewBox="0 0 8 5"><path d="M0 0h8L4 4.500z" fill="#666" /></svg></ZoomBox>
                      <BarBtn $ml={6.5}><svg width="13" height="13" viewBox="0 0 13 13" fill="none" stroke="#d8d8d8" strokeWidth="1.200"><circle cx="5.800" cy="5.800" r="4.800" /><path d="M9.500 9.500l3 2.500" /></svg></BarBtn>
                      <BarBtn $ml={6}><svg width="9" height="9" viewBox="0 0 9 9" stroke="#eee" strokeWidth="1.200"><path d="M0 1h9M0 4.500h9M0 8h9" /></svg></BarBtn>
                      <svg width="64" height="10" viewBox="0 0 64 10" fill="none" stroke="#e8e8e8"><path d="M23 7.500h7" strokeWidth="1.300" /><path d="M56.500 3.500h4.500v4.500h-4.500zM58 3.500V2h5v5h-1.500" /></svg>
                      <CloseDisc><svg width="7" height="7" viewBox="0 0 7 7" stroke="#fff" strokeWidth="1.300"><path d="M.5.5l6 6M6.500.5l-6 6" /></svg></CloseDisc>
                    </BarSide>
                  </PdfBar>
                  <PdfBody>
                    <Thumbs>
                      <ThumbList>
                        {MINI.map((_, i) => (
                          <ThumbCell key={i} $on={i === 1}>
                            <ThumbPage><MiniPage n={i} /></ThumbPage>
                            {i < 8 && i + 1}
                            {i === 1 && (
                              <Cursor><svg width="12" height="17" viewBox="0 0 12 17"><path d="M.5.5v13l3-2.700 2 4.700 2-1-2-4.500h4.500z" fill="#222" stroke="#ddd" strokeWidth=".8" /></svg></Cursor>
                            )}
                          </ThumbCell>
                        ))}
                      </ThumbList>
                      <ViewTabs>
                        <Tab $on><svg width="11" height="12" viewBox="0 0 11 12" fill="none" stroke="#444" strokeWidth="1.300"><path d="M.7 1h3v3h-3zM7 1h3v3H7zM.7 7.500h3v3h-3zM7 7.500h3v3H7z" /></svg></Tab>
                        <Tab><svg width="12" height="13" viewBox="0 0 12 13"><path d="M1 1.500h10v11H1z" fill="none" stroke="#555" strokeWidth="1.200" /><path d="M3 10.500L4 7l4.500-4.500L10 4 5.500 9z" fill="#333" /></svg></Tab>
                        <Tab><svg width="13" height="12" viewBox="0 0 13 12"><path d="M.7 1h11.600v9.500H8L6.500 12 5 10.500H.7z" fill="none" stroke="#444" strokeWidth="1.200" /><path d="M8 1h3v6L9.500 5.500 8 7z" fill="#333" /><path d="M2.500 5h3M2.500 7.500h3" stroke="#555" /></svg></Tab>
                      </ViewTabs>
                    </Thumbs>
                    <PageArea>
                      <Page>
                        <Title><Fit w={235}>Sommaire</Fit></Title>
                        <Rule />
                        <Columns>
                          <SlideColumn rows={LEFT} size={14.5} lh={20} big />
                          <SlideColumn rows={RIGHT} size={15.5} lh={22} />
                        </Columns>
                        <Rule />
                        <Foot>
                          <svg width="16" height="27" viewBox="0 0 16 27"><path d="M-1 1v24.500L13.500 13z" fill="#999" opacity=".55" /><path d="M0 .5v22.500L13 12z" fill="#8eb4cc" /></svg>
                        </Foot>
                      </Page>
                    </PageArea>
                  </PdfBody>
                </Pdf>

                <ShareName><Fit w={144}>ABOUELFATIH Saad (Invité)</Fit></ShareName>
                <CallBar>
                  <Timer><Fit w={31}>15:17</Fit></Timer>
                  <CallBtn><CamOff /></CallBtn>
                  <CallBtn><MicOff /></CallBtn>
                  <CallBtn><ShareUp /></CallBtn>
                  <CallBtn><svg width="18" height="6" viewBox="0 0 18 6" fill="#fff"><circle cx="2.500" cy="3" r="2.200" /><circle cx="9" cy="3" r="2.200" /><circle cx="15.500" cy="3" r="2.200" /></svg></CallBtn>
                  <CallBtn $tone="dark"><Hand /></CallBtn>
                  <CallBtn $tone="dark"><Chat /></CallBtn>
                  <CallBtn $tone="dark"><People /><Badge>2</Badge></CallBtn>
                  <CallBtn $tone="red"><svg width="22" height="10" viewBox="0 0 22 10"><path d="M11 .5c6 0 10.500 2.500 10.500 6 0 2-.8 2.800-2.200 2.600l-3-.5c-1-.2-1.500-.8-1.600-1.800l-.2-1.500Q11 4.200 7.500 5.300l-.2 1.500c-.1 1-.6 1.600-1.600 1.800l-3 .5C1.300 9.300.5 8.500.5 6.500.5 3 5 .5 11 .5z" fill="#fff" /></svg></CallBtn>
                </CallBar>
              </Stage>

              <Strip>
                <Slot>
                  <Raised>
                    <svg width="14" height="22" viewBox="0 0 14 22"><path d="M2 7V4q1.200-1.500 2 0V2.200q1.200-1.500 2.200 0V1.500q1.200-1.500 2.200 0V3q1.200-1.300 2 0v9l1.500-2.500q1.500-1 1.300 1L11.500 17v4h-7v-3Q1.500 15.500 2 7z" fill="#ffbb2c" stroke="#3b2a08" strokeWidth=".8" /><path d="M4.200 4v7M6.400 3v7.500M8.500 3v7.500" stroke="#c5801a" strokeWidth=".7" /><path d="M4.500 18.500h7V21h-7z" fill="#f79a1c" /></svg>
                  </Raised>
                  <More $bg="#6a58a6" $fg="#fff" $s={44}>+8</More>
                </Slot>
                {PEOPLE.map(([t, bg, fg]) => <Slot key={t}><Avatar $bg={bg} $fg={fg}>{t}</Avatar></Slot>)}
                {TILES.map((t) => (
                  <Tile key={t.i} $bg={t.tile}>
                    <Avatar $bg={t.bg} $fg={t.fg} $s={44} $ring={t.ring}>{t.i}</Avatar>
                    <TileName $gap={t.gap ?? 0}><Fit w={t.w}>{t.name}</Fit>{t.mic && <MicOff s={16} />}</TileName>
                  </Tile>
                ))}
              </Strip>
            </Main>
          </TeamsBody>
        </Teams>
      </Work>
    </Desktop>
  );
}
